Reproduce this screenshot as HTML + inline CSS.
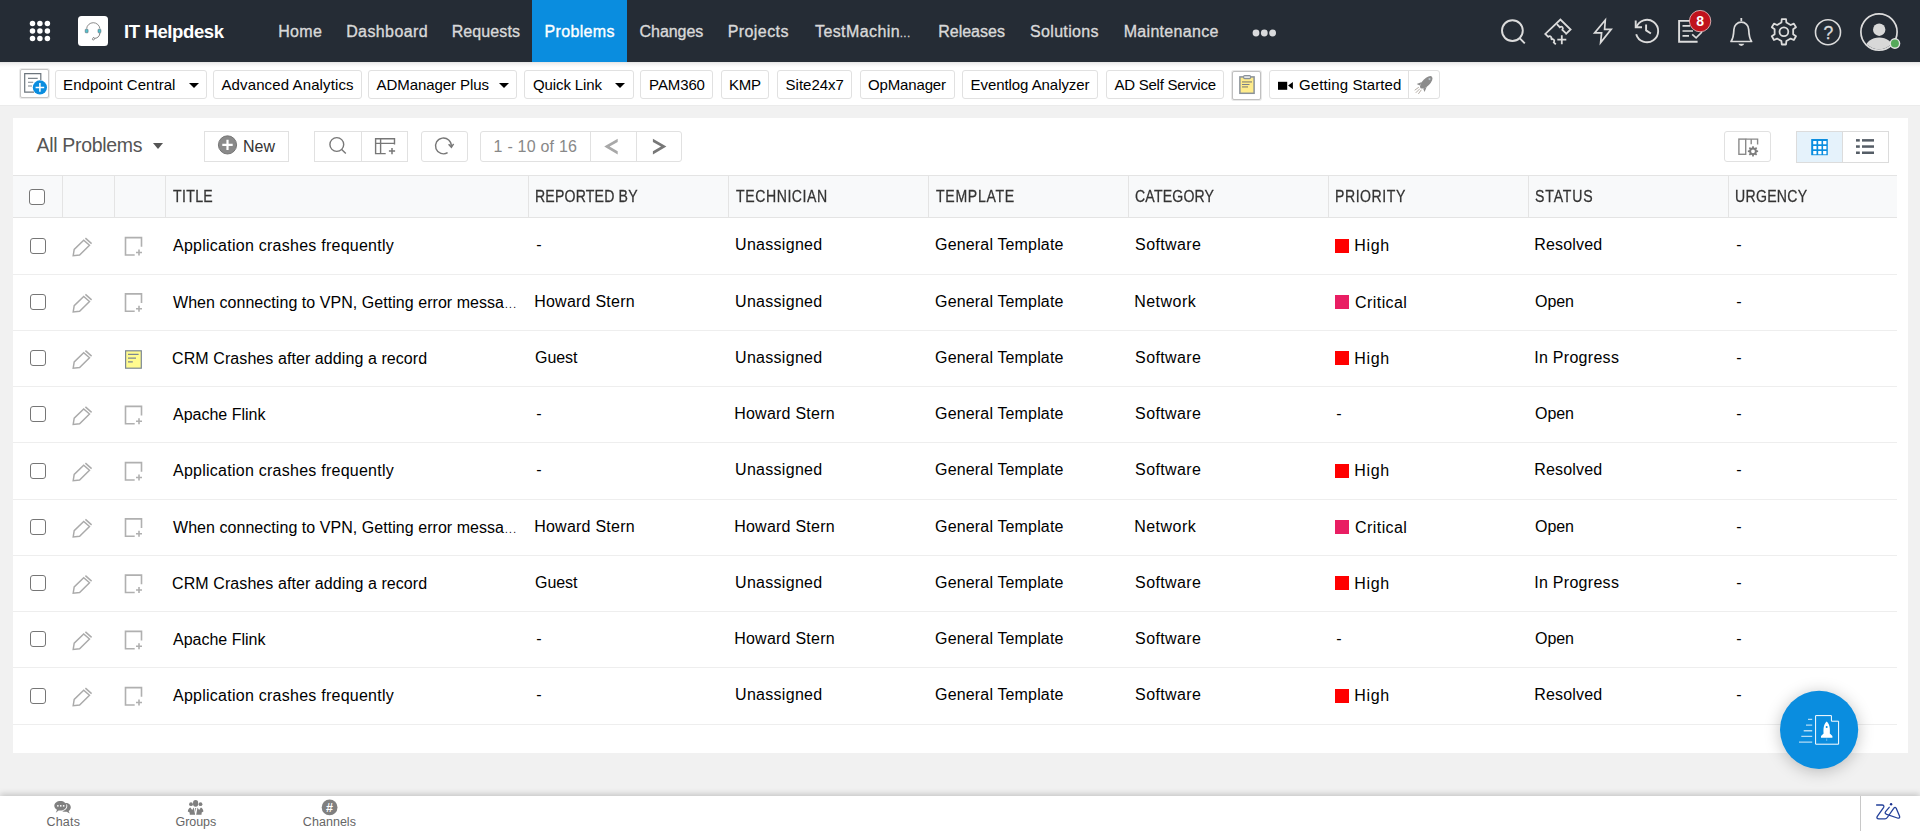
<!DOCTYPE html>
<html lang="en">
<head>
<meta charset="utf-8">
<title>IT Helpdesk - Problems</title>
<style>
*{box-sizing:border-box;margin:0;padding:0}
html,body{width:1920px;height:831px;overflow:hidden;background:#f1f1f1;font-family:"Liberation Sans",Arial,sans-serif}
.abs,.t,.b{position:absolute}
.t{white-space:pre}
#nav{left:0;top:0;width:1920px;height:62px;background:#252c35;box-shadow:0 1px 4px rgba(0,0,0,.35)}
#act{left:532px;top:0;width:95px;height:62px;background:#0a8ddf}
#sub{left:0;top:62px;width:1920px;height:43px;background:linear-gradient(#e2e2e2,#efefef 1.5px,#fafafa 4px,#fff 6px);border-bottom:0}
#subl{left:0;top:105px;width:1920px;height:1px;background:#ebebeb}
.b{border:1px solid #e1e1e1;border-radius:3px;background:#fff;top:70px;height:29px}
#panel{left:13px;top:118px;width:1895px;height:635px;background:#fff}
#thead{left:13px;top:175px;width:1884px;height:43px;background:#f8f9fa;border-top:1px solid #e4e4e4;border-bottom:1px solid #e4e4e4}
.vd{position:absolute;top:176px;width:1px;height:41px;background:#e4e4e4}
.hd{position:absolute;left:13px;width:1884px;height:1px;background:#eeeeee}
.cb{position:absolute;left:29px;width:16px;height:16px;border:1.4px solid #767676;border-radius:3px;background:#fff}
.tb{position:absolute;border:1px solid #e1e1e1;background:#fff;top:131px;height:31px}
#foot{left:0;top:796px;width:1920px;height:35px;background:#fff;box-shadow:0 -2px 6px rgba(0,0,0,.18)}
.sq{position:absolute;left:1335px;width:14px;height:14px}
svg{position:absolute;overflow:visible}
</style>
</head>
<body>
<div id="nav" class="abs"></div>
<div id="act" class="abs"></div>
<div id="sub" class="abs"></div><div id="subl" class="abs"></div>
<div id="panel" class="abs"></div>
<div id="thead" class="abs"></div>
<div class="b" style="left:55px;width:152px"></div>
<div class="b" style="left:213px;width:149px"></div>
<div class="b" style="left:368px;width:149px"></div>
<div class="b" style="left:524px;width:110px"></div>
<div class="b" style="left:640px;width:73px"></div>
<div class="b" style="left:721px;width:48px"></div>
<div class="b" style="left:777px;width:75px"></div>
<div class="b" style="left:860px;width:95px"></div>
<div class="b" style="left:962px;width:136px"></div>
<div class="b" style="left:1106px;width:118px"></div>
<div class="b" style="left:1269px;width:171px"></div>
<div class="abs" style="left:1408px;top:71px;width:1px;height:27px;background:#e1e1e1"></div>
<div class="abs" style="left:189px;top:83px;width:0;height:0;border-left:5px solid transparent;border-right:5px solid transparent;border-top:5px solid #000"></div>
<div class="abs" style="left:499px;top:83px;width:0;height:0;border-left:5px solid transparent;border-right:5px solid transparent;border-top:5px solid #000"></div>
<div class="abs" style="left:615px;top:83px;width:0;height:0;border-left:5px solid transparent;border-right:5px solid transparent;border-top:5px solid #000"></div>
<div class="abs" style="left:20px;top:69px;width:29px;height:29px;border:1px solid #c6c6c6;box-shadow:0 0 0 1px rgba(190,190,190,.3);border-radius:2px;background:#fff"></div>
<div class="abs" style="left:1232px;top:71px;width:29px;height:29px;border:1px solid #c0c0c0;box-shadow:0 0 0 1px rgba(180,180,180,.3);border-radius:2px;background:#fff"></div>
<div class="abs" style="left:152.8px;top:143px;width:0;height:0;border-left:5px solid transparent;border-right:5px solid transparent;border-top:6px solid #555"></div>
<div class="tb" style="left:204px;width:85px"></div>
<div class="tb" style="left:314px;width:94px"></div>
<div class="abs" style="left:361px;top:132px;width:1px;height:29px;background:#e1e1e1"></div>
<div class="tb" style="left:421px;width:47px;border-radius:3px"></div>
<div class="tb" style="left:480px;width:202px;border-radius:3px"></div>
<div class="abs" style="left:590px;top:132px;width:1px;height:29px;background:#e1e1e1"></div>
<div class="abs" style="left:636px;top:132px;width:1px;height:29px;background:#e1e1e1"></div>
<div class="tb" style="left:1724px;width:47px;border-radius:3px"></div>
<div class="tb" style="left:1796px;width:93px;height:32px;border-color:#dcdcdc"></div>
<div class="abs" style="left:1797px;top:132px;width:45px;height:30px;background:#e5f2fb"></div>
<div class="abs" style="left:1842px;top:132px;width:1px;height:30px;background:#dcdcdc"></div>
<div class="vd" style="left:62px"></div>
<div class="vd" style="left:114px"></div>
<div class="vd" style="left:165px"></div>
<div class="vd" style="left:528px"></div>
<div class="vd" style="left:728px"></div>
<div class="vd" style="left:928px"></div>
<div class="vd" style="left:1128px"></div>
<div class="vd" style="left:1328px"></div>
<div class="vd" style="left:1528px"></div>
<div class="vd" style="left:1728px"></div>
<div class="hd" style="top:274px"></div>
<div class="hd" style="top:330px"></div>
<div class="hd" style="top:386px"></div>
<div class="hd" style="top:442px"></div>
<div class="hd" style="top:499px"></div>
<div class="hd" style="top:555px"></div>
<div class="hd" style="top:611px"></div>
<div class="hd" style="top:667px"></div>
<div class="hd" style="top:724px"></div>
<div class="cb" style="top:189px"></div>
<div class="cb" style="left:30px;top:238px"></div>
<div class="sq" style="top:239px;background:#ff0000"></div>
<div class="cb" style="left:30px;top:294px"></div>
<div class="sq" style="top:295px;background:#e91e63"></div>
<div class="cb" style="left:30px;top:350px"></div>
<div class="sq" style="top:351px;background:#ff0000"></div>
<div class="cb" style="left:30px;top:406px"></div>
<div class="cb" style="left:30px;top:463px"></div>
<div class="sq" style="top:464px;background:#ff0000"></div>
<div class="cb" style="left:30px;top:519px"></div>
<div class="sq" style="top:520px;background:#e91e63"></div>
<div class="cb" style="left:30px;top:575px"></div>
<div class="sq" style="top:576px;background:#ff0000"></div>
<div class="cb" style="left:30px;top:631px"></div>
<div class="cb" style="left:30px;top:688px"></div>
<div class="sq" style="top:689px;background:#ff0000"></div>
<div id="foot" class="abs"></div>
<svg width="1920" height="62" style="left:0;top:0" viewBox="0 0 1920 62" fill="none">
<!-- app grid -->
<g fill="#fff">
<circle cx="32.5" cy="23.5" r="2.75"/><circle cx="39.9" cy="23.5" r="2.75"/><circle cx="47.4" cy="23.5" r="2.75"/>
<circle cx="32.5" cy="30.9" r="2.75"/><circle cx="39.9" cy="30.9" r="2.75"/><circle cx="47.4" cy="30.9" r="2.75"/>
<circle cx="32.5" cy="38.4" r="2.75"/><circle cx="39.9" cy="38.4" r="2.75"/><circle cx="47.4" cy="38.4" r="2.75"/>
</g>
<!-- logo -->
<rect x="78" y="16" width="30" height="30" rx="3.5" fill="#fff"/>
<path d="M86.6 28.6 A6.7 6.7 0 0 1 99.9 28.6" stroke="#666" stroke-width="0.75"/>
<path d="M99.9 33 C99.7 36.4 97.6 38 94.8 38.4" stroke="#555" stroke-width="0.75"/>
<rect x="85.2" y="29.2" width="2.9" height="3.6" rx="0.7" fill="#55c3cf" stroke="#4a5560" stroke-width="0.5"/>
<rect x="98" y="29.2" width="2.9" height="3.6" rx="0.7" fill="#55c3cf" stroke="#4a5560" stroke-width="0.5"/>
<ellipse cx="93.5" cy="38.8" rx="0.9" ry="1.4" fill="#fff" stroke="#555" stroke-width="0.6" transform="rotate(25 93.5 38.8)"/>
<!-- more dots -->
<g fill="#d9dadc"><circle cx="1256" cy="33" r="3.4"/><circle cx="1264.3" cy="33" r="3.4"/><circle cx="1272.6" cy="33" r="3.4"/></g>
<g stroke="#dcdcdc" stroke-width="1.9" stroke-linejoin="miter">
<!-- search -->
<circle cx="1512.4" cy="30.6" r="10.4"/>
<path d="M1519.6 38.2 L1524.8 43.4"/>
<!-- ticket plus -->
<path d="M1565.5 34.3 L1570.6 29.5 L1560.4 19.6 L1545.3 33.9 L1548.2 36.8 C1550.3 35.2 1552.6 37.4 1551 39.6 C1553.2 38.2 1555.2 40.4 1553.8 42.4 L1555.8 44.3" stroke-width="1.8"/>
<path d="M1556.9 24.2 L1559.8 27.2 C1561.8 25.6 1563.8 27.8 1562.4 29.8 L1565.8 33.2" stroke-width="1.8"/>
<path d="M1561.8 35.2 V44.2 M1557.3 39.7 H1566.3" stroke-width="1.8"/>
<!-- bolt -->
<path d="M1605.3 20 L1594.6 32.9 H1601.6 L1600.6 42.6 L1611.2 29.3 H1604.6 Z" stroke-width="1.7"/>
<!-- history -->
<path d="M1636.3 27.6 A11.2 11.2 0 1 1 1636.2 34.2" />
<path d="M1635.7 20.6 V27.3 H1642" />
<path d="M1646.1 24.4 V30.4 L1650.9 33.5" />
<!-- tasks -->
<path d="M1692 20.9 H1679.1 V41.7 H1697.6" />
<path d="M1682.5 25.9 H1690 M1682.5 31 H1693 M1682.5 35.8 H1689" stroke-width="1.7"/>
<path d="M1692.2 34.4 L1696.1 37.9 L1702 32" stroke-width="1.7"/>
<!-- bell -->
<path d="M1741.3 18 V21" stroke-width="1.8"/>
<path d="M1731 41.5 H1751.6 C1749 38 1748.9 34 1748.7 29.5 A7.4 7.4 0 0 0 1733.9 29.5 C1733.7 34 1733.6 38 1731 41.5 Z" stroke-width="1.7" stroke-linejoin="round"/>
<path d="M1738.3 43.8 A3.2 3.2 0 0 0 1744.3 43.8 Z" fill="#dcdcdc" stroke="none"/>
<!-- help -->
<circle cx="1828" cy="32.2" r="12.5" stroke-width="1.6"/>
<!-- avatar -->
<circle cx="1879" cy="32" r="18.1" stroke-width="1.7"/>
</g>
<!-- gear -->
<g transform="translate(1783.9 31.8)" stroke="#dcdcdc" stroke-width="1.8" stroke-linejoin="round">
<path d="M-2.48 -9.27 L-2.13 -12.72 L2.13 -12.72 L2.48 -9.27 L6.79 -6.79 L9.95 -8.21 L12.08 -4.52 L9.27 -2.48 L9.27 2.48 L12.08 4.52 L9.95 8.21 L6.79 6.79 L2.48 9.27 L2.13 12.72 L-2.13 12.72 L-2.48 9.27 L-6.79 6.79 L-9.95 8.21 L-12.08 4.52 L-9.27 2.48 L-9.27 -2.48 L-12.08 -4.52 L-9.95 -8.21 L-6.79 -6.79 Z"/>
<circle r="4.4"/>
</g>
<!-- avatar fill -->
<clipPath id="avc"><circle cx="1879" cy="32" r="17.2"/></clipPath>
<g clip-path="url(#avc)" fill="#d8d8d8"><circle cx="1879.2" cy="29.7" r="6.2"/><ellipse cx="1879.2" cy="47.5" rx="13.5" ry="10"/></g>
<circle cx="1894.9" cy="43.5" r="5.4" fill="#e3e3e3"/><circle cx="1894.9" cy="43.5" r="4" fill="#55a95a"/>
<!-- badge -->
<circle cx="1700.1" cy="21.1" r="10.7" fill="#c0121c" stroke="#e8c9cb" stroke-width="0.8"/>
</svg>
<svg width="1920" height="44" style="left:0;top:62px" viewBox="0 62 1920 44" fill="none">
<!-- add-page icon -->
<path d="M40.8 80 V73.7 H24.7 V92.2 H34" stroke="#6c757d" stroke-width="1.2"/>
<path d="M28 78.4 H37.7 M28 82.3 H33.2 M28 86 H32" stroke="#7d858c" stroke-width="1.1"/>
<circle cx="39.9" cy="87.4" r="7.1" fill="#0a8ddf"/>
<path d="M39.9 83.1 V91.7 M35.6 87.4 H44.2" stroke="#fff" stroke-width="1.5"/>
<!-- clipboard -->
<rect x="1239.9" y="76.9" width="14.2" height="16.4" fill="#ffec8b" stroke="#8a9299" stroke-width="1.5"/>
<rect x="1243.6" y="75.6" width="7" height="3" rx="1" fill="#e3e6e8" stroke="#8a9299" stroke-width="1.1"/>
<path d="M1242 81.9 H1252" stroke="#a9a27a" stroke-width="1.6"/>
<path d="M1242 84.5 H1249.5" stroke="#7a808a" stroke-width="1"/>
<path d="M1242 86.9 H1248" stroke="#a9a27a" stroke-width="1.6"/>
<!-- camera -->
<rect x="1278" y="81.8" width="9.2" height="8" fill="#000"/>
<path d="M1288.1 85.6 L1292.9 82 V89.2 Z" fill="#000"/>
<!-- rocket -->
<g transform="rotate(45 1426 82.6)">
<ellipse cx="1426" cy="82.2" rx="3.7" ry="8" fill="#8c8c8c"/>
<path d="M1422.6 85 L1420.4 90.2 L1423.6 89 Z M1429.4 85 L1431.6 90.2 L1428.4 89 Z" fill="#8c8c8c"/>
<circle cx="1426" cy="77.6" r="1.1" fill="#b9c4cc"/>
<path d="M1424.2 91 L1423.4 96 M1426 91.2 V97 M1427.8 91 L1428.6 96" stroke="#b0a8a0" stroke-width="0.9" fill="none"/>
</g>
</svg>
<svg width="1920" height="50" style="left:0;top:125px" viewBox="0 125 1920 50" fill="none">
<!-- new plus -->
<circle cx="227.5" cy="144.9" r="9.1" fill="#8a8a8a" stroke="#6e6e6e" stroke-width="0.9"/>
<path d="M227.5 139.7 V150.1 M222.3 144.9 H232.7" stroke="#fff" stroke-width="2.2"/>
<g stroke="#777" stroke-width="1.4">
<!-- search -->
<circle cx="336.8" cy="144.5" r="6.9"/>
<path d="M341.7 149.6 L345.8 153.6"/>
<!-- add column -->
<path d="M385.7 153.6 H375.6 V138.7 H394.5 V144.6"/>
<path d="M380.6 138.7 V153.6 M375.6 143.4 H394.5"/>
<path d="M392 148 V154.2 M388.9 151.1 H395.1" stroke-width="1.5"/>
<!-- refresh -->
<path d="M451.3 146.3 A7.9 7.9 0 1 0 447.6 152.6" stroke-width="1.4"/>
<path d="M448.6 144.2 L451.4 147.3 L453.6 143.8" stroke-width="1.4"/>
</g>
<!-- pager arrows -->
<path d="M617.7 138.7 L604.2 146.5 L617.7 154.4 V151.2 L609.6 146.5 L617.7 141.9 Z" fill="#a8a8a8"/>
<path d="M652.9 138.7 L666.4 146.5 L652.9 154.4 V151.2 L661 146.5 L652.9 141.9 Z" fill="#777"/>
<!-- column settings -->
<g stroke="#8a8a8a" stroke-width="1.4">
<rect x="1738.9" y="139.1" width="6.8" height="15.2"/>
<path d="M1745.7 139.1 H1757.6 V144.5 M1751.2 139.1 V144.2"/>
</g>
<g transform="translate(1753 151.3)">
<path fill="#7d7d7d" fill-rule="evenodd" d="M-0.94 -3.78 L-0.81 -5.14 L0.81 -5.14 L0.94 -3.78 L2.01 -3.34 L3.06 -4.21 L4.21 -3.06 L3.34 -2.01 L3.78 -0.94 L5.14 -0.81 L5.14 0.81 L3.78 0.94 L3.34 2.01 L4.21 3.06 L3.06 4.21 L2.01 3.34 L0.94 3.78 L0.81 5.14 L-0.81 5.14 L-0.94 3.78 L-2.01 3.34 L-3.06 4.21 L-4.21 3.06 L-3.34 2.01 L-3.78 0.94 L-5.14 0.81 L-5.14 -0.81 L-3.78 -0.94 L-3.34 -2.01 L-4.21 -3.06 L-3.06 -4.21 L-2.01 -3.34 Z M1.9 0 A1.9 1.9 0 1 0 -1.9 0 A1.9 1.9 0 1 0 1.9 0 Z"/>
</g>
<!-- grid view -->
<rect x="1811.2" y="139" width="16.6" height="16.2" fill="#0a8ddf"/>
<g fill="#fff">
<rect x="1813.2" y="141" width="3.3" height="3.3"/><rect x="1818.2" y="141" width="3.3" height="3.3"/><rect x="1823.1" y="141" width="3.3" height="3.3"/>
<rect x="1813.2" y="146" width="3.3" height="3.3"/><rect x="1818.2" y="146" width="3.3" height="3.3"/><rect x="1823.1" y="146" width="3.3" height="3.3"/>
<rect x="1813.2" y="151" width="3.3" height="3.3"/><rect x="1818.2" y="151" width="3.3" height="3.3"/><rect x="1823.1" y="151" width="3.3" height="3.3"/>
</g>
<!-- list view -->
<g fill="#555d66">
<rect x="1856" y="139.1" width="3.8" height="2.5"/><rect x="1862" y="139.1" width="12" height="2.5"/>
<rect x="1856" y="145.3" width="3.8" height="2.5"/><rect x="1862" y="145.3" width="12" height="2.5"/>
<rect x="1856" y="151.5" width="3.8" height="2.5"/><rect x="1862" y="151.5" width="12" height="2.5"/>
</g>
</svg>
<svg width="1920" height="831" style="left:0;top:0;pointer-events:none" viewBox="0 0 1920 831" fill="none">
<defs>
<g id="pen" stroke="#aaa" stroke-width="1.45" stroke-linejoin="miter" fill="none">
<path d="M73.2 255.6 L74.2 249.4 L83.7 240.2 L89.5 245.3 L79.6 255 Z"/>
<path d="M85.4 238.1 L91.6 243.6"/>
</g>
<g id="note" stroke="#b0b0b0" stroke-width="1.6" fill="none">
<path d="M141.5 246.7 V237.6 H125.5 V255 H134.7"/>
<path d="M139 249.5 V255.5 M136 252.5 H142"/>
</g>
<g id="ynote">
<rect x="125.6" y="238.3" width="15.7" height="17.4" fill="#fffb8f" stroke="#7b8794" stroke-width="1.2"/>
<path d="M128 241.9 H138.6 M128 245.6 H136 M128 249.4 H132.8" stroke="#7b8794" stroke-width="1.4"/>
</g>
</defs>
<use href="#pen" y="0.00"/>
<use href="#note" y="0.00"/>
<use href="#pen" y="56.25"/>
<use href="#note" y="56.25"/>
<use href="#pen" y="112.50"/>
<use href="#ynote" y="112.50"/>
<use href="#pen" y="168.75"/>
<use href="#note" y="168.75"/>
<use href="#pen" y="225.00"/>
<use href="#note" y="225.00"/>
<use href="#pen" y="281.25"/>
<use href="#note" y="281.25"/>
<use href="#pen" y="337.50"/>
<use href="#note" y="337.50"/>
<use href="#pen" y="393.75"/>
<use href="#note" y="393.75"/>
<use href="#pen" y="450.00"/>
<use href="#note" y="450.00"/>
<!-- FAB -->
<circle cx="1819.1" cy="729.8" r="39.1" fill="#0a8ddf" style="filter:drop-shadow(0 2px 8px rgba(0,0,0,.24))"/>
<path d="M1815.6 715.6 H1831.4 V721.2 H1838.6 V744.2 H1815.6 Z" stroke="#fff" stroke-width="1"/>
<path d="M1826.7 721.4 C1829.6 724 1830.2 728 1829.8 733.6 L1832.4 736 V737.8 H1821 V736 L1823.6 733.6 C1823.2 728 1823.8 724 1826.7 721.4 Z" fill="#fff"/>
<circle cx="1826.7" cy="727" r="1" fill="#0a8ddf"/>
<path d="M1826.7 738.5 V741" stroke="#7cc4ef" stroke-width="0.8"/>
<g stroke="#b3dcf5" stroke-width="1.4">
<path d="M1808 719.4 H1812.2 M1806 725.1 H1812.2 M1803.7 730.8 H1812.2 M1801.3 736.4 H1812.2 M1799 742.1 H1812.2"/>
</g>
<!-- footer separator + zia -->
<rect x="1860" y="796" width="1" height="35" fill="#c8c8c8"/>
<path d="M1876.6 805 H1882 C1883.8 805 1884.4 806.2 1883.5 807.6 L1877.3 816.4 C1876.4 817.8 1877 818.9 1878.8 818.9 H1885 C1886.2 818.9 1886.6 818.6 1887.3 817.5 L1893.7 808.4 C1894.6 807 1895.8 807 1896.3 808.6 L1899.5 815.9 C1900.2 817.7 1899.2 818.6 1897.4 818 L1886.7 814.3 C1885.1 813.7 1884.7 812.9 1885.6 811.7 L1889.2 807.3" stroke="#23409a" stroke-width="1.3" stroke-linecap="round" stroke-linejoin="round"/>
<circle cx="1891.1" cy="804.2" r="1.2" fill="#1a318f"/>
<!-- chats icon -->
<g fill="#808080">
<path d="M64.5 803.2 C68 802.4 71 804.6 70.8 807.6 C70.7 809.2 69.8 810.4 68.6 811.1 L69.8 813.4 L66.6 811.7 C65 812 63.4 811.8 62.3 811.2 C65.8 810.4 67.6 808 67.3 805.6 C67.1 804.6 66 803.6 64.5 803.2 Z"/>
<path d="M60.4 801 C63.8 801 66.4 803.1 66.4 805.8 C66.4 808.5 63.8 810.6 60.4 810.6 C59.8 810.6 59.2 810.5 58.6 810.4 L55.8 812.8 L57 809.8 C55.4 808.9 54.3 807.5 54.3 805.8 C54.3 803.1 57 801 60.4 801 Z"/>
</g>
<g fill="#fff"><rect x="57.1" y="805.1" width="1.5" height="1.5"/><rect x="60" y="805.1" width="1.5" height="1.5"/><rect x="62.9" y="805.1" width="1.5" height="1.5"/></g>
<!-- groups icon -->
<g fill="#808080">
<ellipse cx="195.6" cy="803.4" rx="2.6" ry="3.3"/>
<circle cx="191" cy="804.2" r="1.9"/><circle cx="200.5" cy="804.2" r="1.9"/>
<path d="M190.4 807.6 L192.2 810 L193.8 807.4 L195.1 814.7 H189.8 L189.6 812.4 L187.8 811.6 C188 809.6 189 808.2 190.4 807.6 Z"/>
<path d="M200.9 807.6 L199.1 810 L197.5 807.4 L196.2 814.7 H201.5 L201.7 812.4 L203.4 811.6 C203.2 809.6 202.3 808.2 200.9 807.6 Z"/>
<path d="M195.1 808 H196.2 L195.65 812 Z"/>
</g>
<!-- channels icon -->
<circle cx="329.6" cy="807.4" r="7.9" fill="#808080"/>
</svg>

<span class="t" style="left:124.10px;top:19px;line-height:26px;font-size:18.5px;font-weight:700;color:#fff;letter-spacing:-0.394px;">IT Helpdesk</span>
<span class="t" style="left:278.14px;top:21px;line-height:22px;font-size:16px;font-weight:400;color:#d9d9d9;letter-spacing:0.378px;-webkit-text-stroke:0.35px #d9d9d9;">Home</span>
<span class="t" style="left:346.16px;top:21px;line-height:22px;font-size:16px;font-weight:400;color:#d9d9d9;letter-spacing:0.401px;-webkit-text-stroke:0.35px #d9d9d9;">Dashboard</span>
<span class="t" style="left:451.66px;top:21px;line-height:22px;font-size:16px;font-weight:400;color:#d9d9d9;letter-spacing:0.107px;-webkit-text-stroke:0.35px #d9d9d9;">Requests</span>
<span class="t" style="left:544.60px;top:21px;line-height:22px;font-size:16px;font-weight:400;color:#fff;letter-spacing:0.332px;-webkit-text-stroke:0.35px #fff;">Problems</span>
<span class="t" style="left:639.56px;top:21px;line-height:22px;font-size:16px;font-weight:400;color:#d9d9d9;letter-spacing:-0.059px;-webkit-text-stroke:0.35px #d9d9d9;">Changes</span>
<span class="t" style="left:727.66px;top:21px;line-height:22px;font-size:16px;font-weight:400;color:#d9d9d9;letter-spacing:0.435px;-webkit-text-stroke:0.35px #d9d9d9;">Projects</span>
<span class="t" style="left:814.98px;top:21px;line-height:22px;font-size:16px;font-weight:400;color:#d9d9d9;letter-spacing:0.416px;-webkit-text-stroke:0.35px #d9d9d9;">TestMachin</span>
<span class="t" style="left:900.02px;top:27px;line-height:14px;font-size:10px;font-weight:400;color:#d9d9d9;letter-spacing:0.798px;-webkit-text-stroke:0.35px #d9d9d9;">...</span>
<span class="t" style="left:938.16px;top:21px;line-height:22px;font-size:16px;font-weight:400;color:#d9d9d9;letter-spacing:0.014px;-webkit-text-stroke:0.35px #d9d9d9;">Releases</span>
<span class="t" style="left:1030.04px;top:21px;line-height:22px;font-size:16px;font-weight:400;color:#d9d9d9;letter-spacing:0.329px;-webkit-text-stroke:0.35px #d9d9d9;">Solutions</span>
<span class="t" style="left:1123.64px;top:21px;line-height:22px;font-size:16px;font-weight:400;color:#d9d9d9;letter-spacing:0.323px;-webkit-text-stroke:0.35px #d9d9d9;">Maintenance</span>
<span class="t" style="left:63.10px;top:74px;line-height:21px;font-size:15px;font-weight:400;color:#000;letter-spacing:0.037px;">Endpoint Central</span>
<span class="t" style="left:221.50px;top:74px;line-height:21px;font-size:15px;font-weight:400;color:#000;letter-spacing:0.113px;">Advanced Analytics</span>
<span class="t" style="left:376.50px;top:74px;line-height:21px;font-size:15px;font-weight:400;color:#000;letter-spacing:-0.069px;">ADManager Plus</span>
<span class="t" style="left:533.02px;top:74px;line-height:21px;font-size:15px;font-weight:400;color:#000;letter-spacing:-0.117px;">Quick Link</span>
<span class="t" style="left:649.12px;top:74px;line-height:21px;font-size:15px;font-weight:400;color:#000;letter-spacing:-0.116px;">PAM360</span>
<span class="t" style="left:729.12px;top:74px;line-height:21px;font-size:15px;font-weight:400;color:#000;letter-spacing:-0.358px;">KMP</span>
<span class="t" style="left:785.60px;top:74px;line-height:21px;font-size:15px;font-weight:400;color:#000;letter-spacing:-0.011px;">Site24x7</span>
<span class="t" style="left:868.08px;top:74px;line-height:21px;font-size:15px;font-weight:400;color:#000;letter-spacing:-0.162px;">OpManager</span>
<span class="t" style="left:970.60px;top:74px;line-height:21px;font-size:15px;font-weight:400;color:#000;letter-spacing:-0.072px;">Eventlog Analyzer</span>
<span class="t" style="left:1114.50px;top:74px;line-height:21px;font-size:15px;font-weight:400;color:#000;letter-spacing:-0.253px;">AD Self Service</span>
<span class="t" style="left:1299.12px;top:74px;line-height:21px;font-size:15px;font-weight:400;color:#000;letter-spacing:0.098px;">Getting Started</span>
<span class="t" style="left:36.46px;top:132px;line-height:27px;font-size:19.5px;font-weight:400;color:#555;letter-spacing:-0.318px;">All Problems</span>
<span class="t" style="left:243.12px;top:136px;line-height:22px;font-size:16px;font-weight:400;color:#333;letter-spacing:-0.068px;">New</span>
<span class="t" style="left:493.62px;top:136px;line-height:22px;font-size:16px;font-weight:400;color:#888;letter-spacing:0.219px;">1 - 10 of 16</span>
<span class="t" style="left:173.00px;top:186px;line-height:21px;font-size:15px;font-weight:400;color:#333;letter-spacing:0.349px;text-shadow:0 1px 0 #fff;-webkit-text-stroke:0.25px #333;transform:scale(.94,1.1);transform-origin:0 16px;">TITLE</span>
<span class="t" style="left:535.08px;top:186px;line-height:21px;font-size:15px;font-weight:400;color:#333;letter-spacing:0.187px;text-shadow:0 1px 0 #fff;-webkit-text-stroke:0.25px #333;transform:scale(.94,1.1);transform-origin:0 16px;">REPORTED BY</span>
<span class="t" style="left:735.50px;top:186px;line-height:21px;font-size:15px;font-weight:400;color:#333;letter-spacing:0.598px;text-shadow:0 1px 0 #fff;-webkit-text-stroke:0.25px #333;transform:scale(.94,1.1);transform-origin:0 16px;">TECHNICIAN</span>
<span class="t" style="left:936.00px;top:186px;line-height:21px;font-size:15px;font-weight:400;color:#333;letter-spacing:0.725px;text-shadow:0 1px 0 #fff;-webkit-text-stroke:0.25px #333;transform:scale(.94,1.1);transform-origin:0 16px;">TEMPLATE</span>
<span class="t" style="left:1135.08px;top:186px;line-height:21px;font-size:15px;font-weight:400;color:#333;letter-spacing:0.182px;text-shadow:0 1px 0 #fff;-webkit-text-stroke:0.25px #333;transform:scale(.94,1.1);transform-origin:0 16px;">CATEGORY</span>
<span class="t" style="left:1335.08px;top:186px;line-height:21px;font-size:15px;font-weight:400;color:#333;letter-spacing:0.568px;text-shadow:0 1px 0 #fff;-webkit-text-stroke:0.25px #333;transform:scale(.94,1.1);transform-origin:0 16px;">PRIORITY</span>
<span class="t" style="left:1535.08px;top:186px;line-height:21px;font-size:15px;font-weight:400;color:#333;letter-spacing:0.893px;text-shadow:0 1px 0 #fff;-webkit-text-stroke:0.25px #333;transform:scale(.94,1.1);transform-origin:0 16px;">STATUS</span>
<span class="t" style="left:1735.08px;top:186px;line-height:21px;font-size:15px;font-weight:400;color:#333;letter-spacing:0.301px;text-shadow:0 1px 0 #fff;-webkit-text-stroke:0.25px #333;transform:scale(.94,1.1);transform-origin:0 16px;">URGENCY</span>
<span class="t" style="left:173.00px;top:235px;line-height:22px;font-size:16px;font-weight:400;color:#000;letter-spacing:0.252px;">Application crashes frequently</span>
<span class="t" style="left:536.25px;top:234px;line-height:22px;font-size:16px;font-weight:400;color:#000;letter-spacing:0.000px;">-</span>
<span class="t" style="left:735.08px;top:234px;line-height:22px;font-size:16px;font-weight:400;color:#000;letter-spacing:0.286px;">Unassigned</span>
<span class="t" style="left:935.08px;top:234px;line-height:22px;font-size:16px;font-weight:400;color:#000;letter-spacing:0.155px;">General Template</span>
<span class="t" style="left:1135.08px;top:234px;line-height:22px;font-size:16px;font-weight:400;color:#000;letter-spacing:0.383px;">Software</span>
<span class="t" style="left:1354.18px;top:235px;line-height:22px;font-size:16px;font-weight:400;color:#000;letter-spacing:0.688px;">High</span>
<span class="t" style="left:1534.18px;top:234px;line-height:22px;font-size:16px;font-weight:400;color:#000;letter-spacing:0.181px;">Resolved</span>
<span class="t" style="left:1736.25px;top:234px;line-height:22px;font-size:16px;font-weight:400;color:#000;letter-spacing:0.000px;">-</span>
<span class="t" style="left:173.00px;top:292px;line-height:22px;font-size:16px;font-weight:400;color:#000;letter-spacing:0.047px;">When connecting to VPN, Getting error messa</span>
<span class="t" style="left:505.08px;top:298px;line-height:14px;font-size:10px;font-weight:400;color:#000;letter-spacing:1.248px;">...</span>
<span class="t" style="left:534.18px;top:291px;line-height:22px;font-size:16px;font-weight:400;color:#000;letter-spacing:0.240px;">Howard Stern</span>
<span class="t" style="left:735.08px;top:291px;line-height:22px;font-size:16px;font-weight:400;color:#000;letter-spacing:0.286px;">Unassigned</span>
<span class="t" style="left:935.08px;top:291px;line-height:22px;font-size:16px;font-weight:400;color:#000;letter-spacing:0.155px;">General Template</span>
<span class="t" style="left:1134.18px;top:291px;line-height:22px;font-size:16px;font-weight:400;color:#000;letter-spacing:0.480px;">Network</span>
<span class="t" style="left:1355.08px;top:292px;line-height:22px;font-size:16px;font-weight:400;color:#000;letter-spacing:0.421px;">Critical</span>
<span class="t" style="left:1535.08px;top:291px;line-height:22px;font-size:16px;font-weight:400;color:#000;letter-spacing:-0.100px;">Open</span>
<span class="t" style="left:1736.25px;top:291px;line-height:22px;font-size:16px;font-weight:400;color:#000;letter-spacing:0.000px;">-</span>
<span class="t" style="left:172.10px;top:348px;line-height:22px;font-size:16px;font-weight:400;color:#000;letter-spacing:0.078px;">CRM Crashes after adding a record</span>
<span class="t" style="left:535.08px;top:347px;line-height:22px;font-size:16px;font-weight:400;color:#000;letter-spacing:-0.067px;">Guest</span>
<span class="t" style="left:735.08px;top:347px;line-height:22px;font-size:16px;font-weight:400;color:#000;letter-spacing:0.286px;">Unassigned</span>
<span class="t" style="left:935.08px;top:347px;line-height:22px;font-size:16px;font-weight:400;color:#000;letter-spacing:0.155px;">General Template</span>
<span class="t" style="left:1135.08px;top:347px;line-height:22px;font-size:16px;font-weight:400;color:#000;letter-spacing:0.383px;">Software</span>
<span class="t" style="left:1354.18px;top:348px;line-height:22px;font-size:16px;font-weight:400;color:#000;letter-spacing:0.688px;">High</span>
<span class="t" style="left:1534.18px;top:347px;line-height:22px;font-size:16px;font-weight:400;color:#000;letter-spacing:0.293px;">In Progress</span>
<span class="t" style="left:1736.25px;top:347px;line-height:22px;font-size:16px;font-weight:400;color:#000;letter-spacing:0.000px;">-</span>
<span class="t" style="left:173.00px;top:404px;line-height:22px;font-size:16px;font-weight:400;color:#000;letter-spacing:0.000px;">Apache Flink</span>
<span class="t" style="left:536.25px;top:403px;line-height:22px;font-size:16px;font-weight:400;color:#000;letter-spacing:0.000px;">-</span>
<span class="t" style="left:734.18px;top:403px;line-height:22px;font-size:16px;font-weight:400;color:#000;letter-spacing:0.240px;">Howard Stern</span>
<span class="t" style="left:935.08px;top:403px;line-height:22px;font-size:16px;font-weight:400;color:#000;letter-spacing:0.155px;">General Template</span>
<span class="t" style="left:1135.08px;top:403px;line-height:22px;font-size:16px;font-weight:400;color:#000;letter-spacing:0.383px;">Software</span>
<span class="t" style="left:1336.25px;top:403px;line-height:22px;font-size:16px;font-weight:400;color:#000;letter-spacing:0.000px;">-</span>
<span class="t" style="left:1535.08px;top:403px;line-height:22px;font-size:16px;font-weight:400;color:#000;letter-spacing:-0.100px;">Open</span>
<span class="t" style="left:1736.25px;top:403px;line-height:22px;font-size:16px;font-weight:400;color:#000;letter-spacing:0.000px;">-</span>
<span class="t" style="left:173.00px;top:460px;line-height:22px;font-size:16px;font-weight:400;color:#000;letter-spacing:0.252px;">Application crashes frequently</span>
<span class="t" style="left:536.25px;top:459px;line-height:22px;font-size:16px;font-weight:400;color:#000;letter-spacing:0.000px;">-</span>
<span class="t" style="left:735.08px;top:459px;line-height:22px;font-size:16px;font-weight:400;color:#000;letter-spacing:0.286px;">Unassigned</span>
<span class="t" style="left:935.08px;top:459px;line-height:22px;font-size:16px;font-weight:400;color:#000;letter-spacing:0.155px;">General Template</span>
<span class="t" style="left:1135.08px;top:459px;line-height:22px;font-size:16px;font-weight:400;color:#000;letter-spacing:0.383px;">Software</span>
<span class="t" style="left:1354.18px;top:460px;line-height:22px;font-size:16px;font-weight:400;color:#000;letter-spacing:0.688px;">High</span>
<span class="t" style="left:1534.18px;top:459px;line-height:22px;font-size:16px;font-weight:400;color:#000;letter-spacing:0.181px;">Resolved</span>
<span class="t" style="left:1736.25px;top:459px;line-height:22px;font-size:16px;font-weight:400;color:#000;letter-spacing:0.000px;">-</span>
<span class="t" style="left:173.00px;top:517px;line-height:22px;font-size:16px;font-weight:400;color:#000;letter-spacing:0.047px;">When connecting to VPN, Getting error messa</span>
<span class="t" style="left:505.08px;top:523px;line-height:14px;font-size:10px;font-weight:400;color:#000;letter-spacing:1.248px;">...</span>
<span class="t" style="left:534.18px;top:516px;line-height:22px;font-size:16px;font-weight:400;color:#000;letter-spacing:0.240px;">Howard Stern</span>
<span class="t" style="left:734.18px;top:516px;line-height:22px;font-size:16px;font-weight:400;color:#000;letter-spacing:0.240px;">Howard Stern</span>
<span class="t" style="left:935.08px;top:516px;line-height:22px;font-size:16px;font-weight:400;color:#000;letter-spacing:0.155px;">General Template</span>
<span class="t" style="left:1134.18px;top:516px;line-height:22px;font-size:16px;font-weight:400;color:#000;letter-spacing:0.480px;">Network</span>
<span class="t" style="left:1355.08px;top:517px;line-height:22px;font-size:16px;font-weight:400;color:#000;letter-spacing:0.421px;">Critical</span>
<span class="t" style="left:1535.08px;top:516px;line-height:22px;font-size:16px;font-weight:400;color:#000;letter-spacing:-0.100px;">Open</span>
<span class="t" style="left:1736.25px;top:516px;line-height:22px;font-size:16px;font-weight:400;color:#000;letter-spacing:0.000px;">-</span>
<span class="t" style="left:172.10px;top:573px;line-height:22px;font-size:16px;font-weight:400;color:#000;letter-spacing:0.078px;">CRM Crashes after adding a record</span>
<span class="t" style="left:535.08px;top:572px;line-height:22px;font-size:16px;font-weight:400;color:#000;letter-spacing:-0.067px;">Guest</span>
<span class="t" style="left:735.08px;top:572px;line-height:22px;font-size:16px;font-weight:400;color:#000;letter-spacing:0.286px;">Unassigned</span>
<span class="t" style="left:935.08px;top:572px;line-height:22px;font-size:16px;font-weight:400;color:#000;letter-spacing:0.155px;">General Template</span>
<span class="t" style="left:1135.08px;top:572px;line-height:22px;font-size:16px;font-weight:400;color:#000;letter-spacing:0.383px;">Software</span>
<span class="t" style="left:1354.18px;top:573px;line-height:22px;font-size:16px;font-weight:400;color:#000;letter-spacing:0.688px;">High</span>
<span class="t" style="left:1534.18px;top:572px;line-height:22px;font-size:16px;font-weight:400;color:#000;letter-spacing:0.293px;">In Progress</span>
<span class="t" style="left:1736.25px;top:572px;line-height:22px;font-size:16px;font-weight:400;color:#000;letter-spacing:0.000px;">-</span>
<span class="t" style="left:173.00px;top:629px;line-height:22px;font-size:16px;font-weight:400;color:#000;letter-spacing:0.000px;">Apache Flink</span>
<span class="t" style="left:536.25px;top:628px;line-height:22px;font-size:16px;font-weight:400;color:#000;letter-spacing:0.000px;">-</span>
<span class="t" style="left:734.18px;top:628px;line-height:22px;font-size:16px;font-weight:400;color:#000;letter-spacing:0.240px;">Howard Stern</span>
<span class="t" style="left:935.08px;top:628px;line-height:22px;font-size:16px;font-weight:400;color:#000;letter-spacing:0.155px;">General Template</span>
<span class="t" style="left:1135.08px;top:628px;line-height:22px;font-size:16px;font-weight:400;color:#000;letter-spacing:0.383px;">Software</span>
<span class="t" style="left:1336.25px;top:628px;line-height:22px;font-size:16px;font-weight:400;color:#000;letter-spacing:0.000px;">-</span>
<span class="t" style="left:1535.08px;top:628px;line-height:22px;font-size:16px;font-weight:400;color:#000;letter-spacing:-0.100px;">Open</span>
<span class="t" style="left:1736.25px;top:628px;line-height:22px;font-size:16px;font-weight:400;color:#000;letter-spacing:0.000px;">-</span>
<span class="t" style="left:173.00px;top:685px;line-height:22px;font-size:16px;font-weight:400;color:#000;letter-spacing:0.252px;">Application crashes frequently</span>
<span class="t" style="left:536.25px;top:684px;line-height:22px;font-size:16px;font-weight:400;color:#000;letter-spacing:0.000px;">-</span>
<span class="t" style="left:735.08px;top:684px;line-height:22px;font-size:16px;font-weight:400;color:#000;letter-spacing:0.286px;">Unassigned</span>
<span class="t" style="left:935.08px;top:684px;line-height:22px;font-size:16px;font-weight:400;color:#000;letter-spacing:0.155px;">General Template</span>
<span class="t" style="left:1135.08px;top:684px;line-height:22px;font-size:16px;font-weight:400;color:#000;letter-spacing:0.383px;">Software</span>
<span class="t" style="left:1354.18px;top:685px;line-height:22px;font-size:16px;font-weight:400;color:#000;letter-spacing:0.688px;">High</span>
<span class="t" style="left:1534.18px;top:684px;line-height:22px;font-size:16px;font-weight:400;color:#000;letter-spacing:0.181px;">Resolved</span>
<span class="t" style="left:1736.25px;top:684px;line-height:22px;font-size:16px;font-weight:400;color:#000;letter-spacing:0.000px;">-</span>
<span class="t" style="left:46.54px;top:813px;line-height:18px;font-size:12.5px;font-weight:400;color:#666;letter-spacing:0.181px;">Chats</span>
<span class="t" style="left:175.60px;top:813px;line-height:18px;font-size:12.5px;font-weight:400;color:#666;letter-spacing:-0.070px;">Groups</span>
<span class="t" style="left:302.85px;top:813px;line-height:18px;font-size:12.5px;font-weight:400;color:#666;letter-spacing:0.040px;">Channels</span>
<span class="t" style="left:1696.20px;top:11px;line-height:20px;font-size:14px;font-weight:700;color:#fff;letter-spacing:0.000px;">8</span>
<span class="t" style="left:1823.40px;top:21px;line-height:24px;font-size:17.5px;font-weight:400;color:#dcdcdc;letter-spacing:0.000px;-webkit-text-stroke:0.3px #dcdcdc;">?</span>
<span class="t" style="left:325.90px;top:799px;line-height:18px;font-size:12.5px;font-weight:700;color:#fff;letter-spacing:0.000px;">#</span>
</body>
</html>
